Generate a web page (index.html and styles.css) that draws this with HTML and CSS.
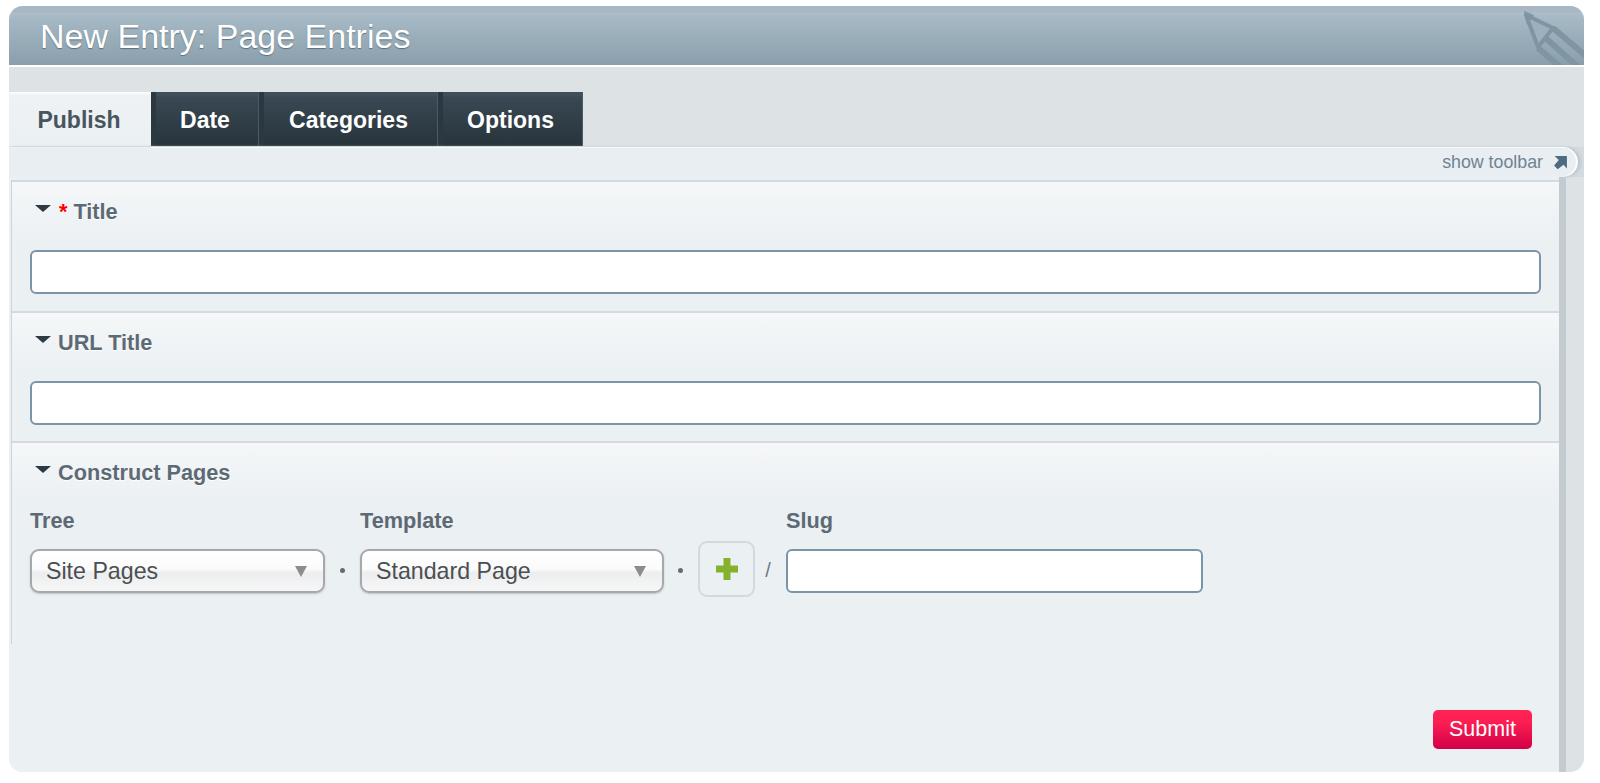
FILE: index.html
```html
<!DOCTYPE html>
<html lang="en">
<head>
<meta charset="utf-8">
<title>New Entry: Page Entries</title>
<link rel="stylesheet" href="styles.css">
</head>
<body>
<div class="panel">
  <header class="head">
    <h1>New Entry: Page Entries</h1>
    <svg class="pencil" viewBox="0 0 60 59" width="60" height="59" aria-hidden="true">
      <path d="M2 9 L29 22 L14 41 Z" fill="#9db1bd" stroke="#7f95a3" stroke-width="4" stroke-linejoin="round"/>
      <path d="M0 5 L10 9 L3 19 Z" fill="#7f95a3"/>
      <path d="M29 22 L64 52 M14 42 L40 64 M21.5 32 L54 61" fill="none" stroke="#7f95a3" stroke-width="6"/>
    </svg>
  </header>
  <nav class="tabs">
    <a class="tab active">Publish</a>
    <a class="tab tab-date">Date</a>
    <a class="tab tab-cat">Categories</a>
    <a class="tab tab-opt">Options</a>
  </nav>
  <div class="toolbar">
    <div class="pill">
      <span class="toolbar-text">show toolbar</span>
      <svg class="arrow" viewBox="0 0 14 14" width="15" height="15" aria-hidden="true"><path d="M1.5 1 H13 V12.5 L9.8 9.2 L4.4 13.4 L1 9.8 L5.4 4.6 Z" fill="#4f6b80"/></svg>
    </div>
  </div>
  <main class="content">
    <div class="fields">
      <section class="field">
        <h2 class="field-label"><span class="caret"></span><span class="req">*</span>Title</h2>
        <div class="input wide"></div>
      </section>
      <section class="field">
        <h2 class="field-label"><span class="caret"></span>URL Title</h2>
        <div class="input wide"></div>
      </section>
      <section class="field last">
        <h2 class="field-label"><span class="caret"></span>Construct Pages</h2>
        <div class="pages">
          <div class="col col-tree">
            <label class="sub">Tree</label>
            <div class="select"><span>Site Pages</span><i class="tri"></i></div>
          </div>
          <span class="dot"></span>
          <div class="col col-tpl">
            <label class="sub">Template</label>
            <div class="select"><span>Standard Page</span><i class="tri"></i></div>
          </div>
          <span class="dot"></span>
          <div class="add">
            <svg viewBox="0 0 22 22" width="22" height="22" aria-hidden="true"><path d="M7.5 0 H14.5 V7.5 H22 V14.5 H14.5 V22 H7.5 V14.5 H0 V7.5 H7.5 Z" fill="#84b22e"/></svg>
          </div>
          <span class="slash">/</span>
          <div class="col col-slug">
            <label class="sub">Slug</label>
            <div class="input"></div>
          </div>
        </div>
      </section>
    </div>
    <div class="actions"><button class="submit" type="button">Submit</button></div>
  </main>
</div>
</body>
</html>
```

FILE: styles.css
```css
* { box-sizing: border-box; }
html, body { margin: 0; background: #fff; }
body { padding: 6px 16px 11px 9px; font-family: "Liberation Sans", Arial, sans-serif; }
.panel {
  width: 1575px;
  height: 766px;
  background: #dde2e5;
  border-radius: 14px;
  overflow: hidden;
  display: flex;
  flex-direction: column;
}
.head {
  position: relative;
  height: 61px;
  flex: none;
  padding-left: 31px;
  overflow: hidden;
  border-bottom: 2px solid #fff;
  background: linear-gradient(#a9b6c3 0, #a9b6c3 7px, #b0c2cd 7px, #a7bac6 9px, #8a9fac 59px);
}
.head h1 {
  margin: 0;
  font-weight: 400;
  font-size: 34px;
  line-height: 60px;
  color: #fff;
  text-shadow: 0 1px 1px #5d6f7b;
}
.pencil { position: absolute; right: 0; top: 0; }
.tabs {
  display: flex;
  flex: none;
  height: 80px;
  padding-top: 25px;
}
.tab {
  display: block;
  height: 54px;
  padding-right: 4px;
  font-weight: 700;
  font-size: 23px;
  line-height: 56px;
  text-align: center;
  color: #fff;
  background: linear-gradient(#3f4e58 0, #3f4e58 4px, #3a4853 5px, #27343c 100%);
  border-left: 5px solid #2b3841;
  border-right: 1px solid #4b5a64;
}
.tab.active {
  width: 142px;
  padding-right: 2px;
  color: #48555e;
  border: 0;
  background: linear-gradient(#fff 0, #eef2f4 3px, #ebf0f3 100%);
}
.tab-date { width: 108px; }
.tab-cat { width: 179px; }
.tab-opt { width: 145px; }
.toolbar {
  flex: none;
  height: 30px;
  display: flex;
  background: #d3dbe1;
  padding-right: 6px;
}
.pill {
  flex: 1;
  display: flex;
  justify-content: flex-end;
  align-items: center;
  gap: 10px;
  padding: 1px 10px 0 0;
  background: linear-gradient(to right, #ebf0f3 142px, #f8fafb 142px) top / 100% 1px no-repeat, #e9eef2;
  border-radius: 0 15px 15px 0;
  box-shadow: inset -2px 0 1px #fff, 3px 0 3px #bcc8d1;
}
.toolbar-text { font-size: 17.8px; color: #6f8392; }
.arrow { display: block; }
.content {
  flex: 1;
  min-height: 0;
  margin-right: 18px;
  padding: 3px 0 0 2px;
  background: #ebf0f3;
  border-right: 7px solid #c3cad0;
  display: flex;
  flex-direction: column;
}
.fields {
  flex: none;
  height: 464px;
  border-left: 1px solid #ccd5de;
  display: flex;
  flex-direction: column;
}
.field {
  flex: none;
  height: 131px;
  padding: 18px 18px 0 18px;
  border-top: 2px solid #d3dae1;
  background: linear-gradient(#f5f7f8 0, #ebf0f3 60px);
}
.field + .field { height: 130px; }
.field.last { height: 203px; }
.field-label {
  display: flex;
  align-items: center;
  margin: 0;
  font-size: 21.7px;
  line-height: 24px;
  font-weight: 700;
  color: #5d6a74;
  text-shadow: 0 1px 0 #fff;
}
.caret {
  width: 0;
  height: 0;
  margin: -7px 7px 0 5px;
  border-left: 8.5px solid transparent;
  border-right: 8.5px solid transparent;
  border-top: 7px solid #2d3a43;
}
.req { color: #f00; margin: 0 6px 0 1px; }
.input {
  height: 44px;
  background: #fff;
  border: 2px solid #7b95a8;
  border-radius: 6px;
}
.wide { margin-top: 26px; }
.pages {
  display: flex;
  align-items: flex-start;
  margin-top: 24px;
}
.col { display: flex; flex-direction: column; flex: none; }
.col-tree { width: 295px; }
.col-tpl { width: 304px; }
.col-slug { width: 417px; }
.sub {
  display: block;
  height: 40px;
  font-size: 21.7px;
  line-height: 24px;
  font-weight: 700;
  color: #5d6a74;
}
.select {
  height: 44px;
  display: flex;
  align-items: center;
  justify-content: space-between;
  padding: 0 16px 0 14px;
  border: 2px solid #a5a9ab;
  border-radius: 9px;
  font-size: 23.2px;
  color: #4b4f52;
  background: linear-gradient(#fff 0, #fbfbfb 45%, #ecedee 55%, #f7f7f8 100%);
  box-shadow: 0 1px 2px #bcc3c8;
}
.tri {
  width: 0;
  height: 0;
  border-left: 6px solid transparent;
  border-right: 6px solid transparent;
  border-top: 11px solid #8a8c8d;
}
.dot {
  flex: none;
  width: 5px;
  height: 5px;
  margin: 59px 15px 0;
  border-radius: 50%;
  background: #5f6d78;
}
.col-tpl + .dot { margin: 59px 15px 0 14px; }
.add {
  flex: none;
  width: 57px;
  height: 56px;
  margin-top: 32px;
  display: flex;
  align-items: center;
  justify-content: center;
  border: 2px solid #d3d9de;
  border-radius: 9px;
}
.slash {
  flex: none;
  width: 31px;
  margin-top: 46px;
  padding-right: 5px;
  text-align: center;
  font-size: 20px;
  line-height: 30px;
  color: #6d7a84;
}
.actions {
  display: flex;
  justify-content: flex-end;
  padding: 66px 27px 0 0;
}
.submit {
  width: 99px;
  height: 39px;
  padding: 0;
  border: 0;
  border-radius: 5px;
  font-family: inherit;
  font-size: 21.5px;
  color: #fff;
  background: linear-gradient(#ff2456 0, #fc1f52 30%, #d30048 100%);
}
```
